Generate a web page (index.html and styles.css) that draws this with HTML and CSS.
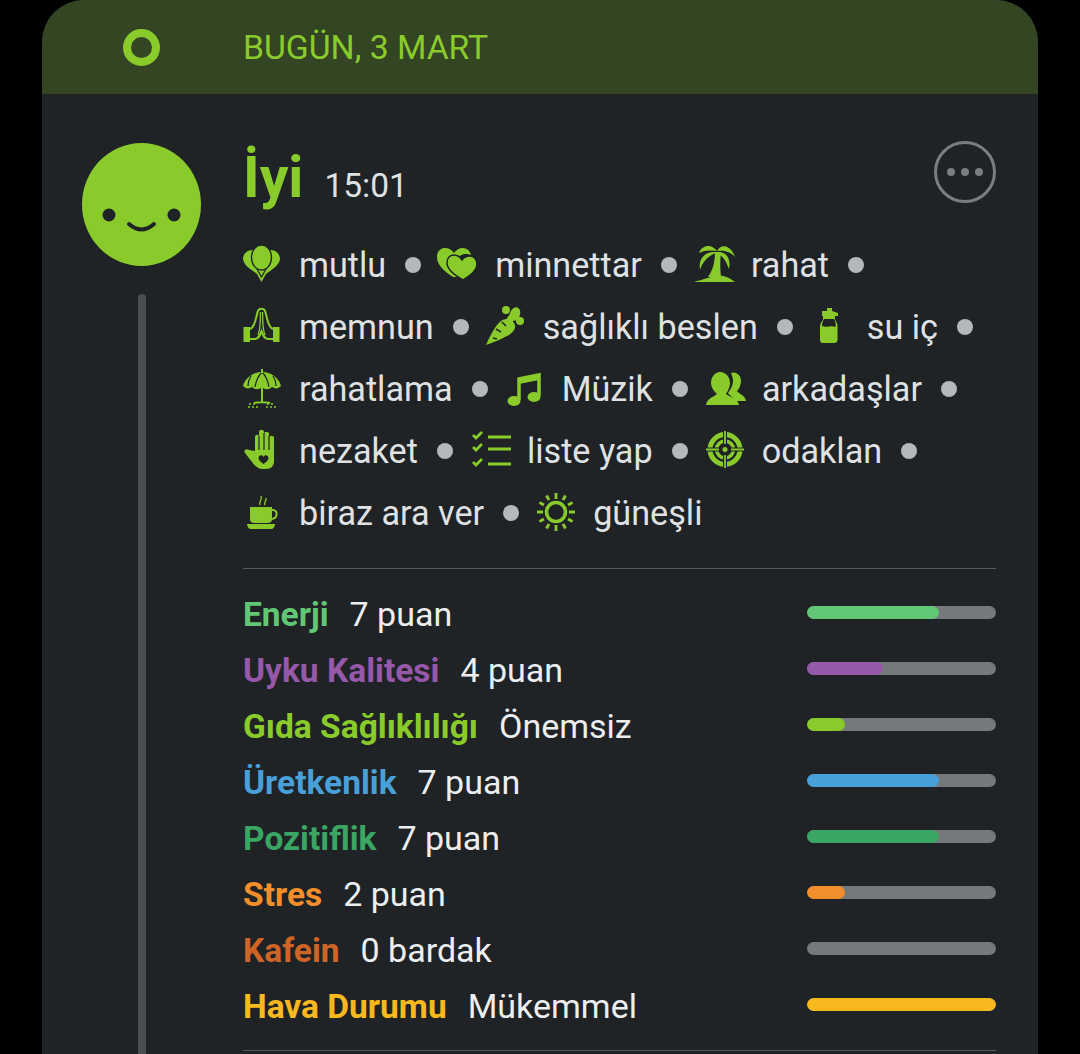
FILE: index.html
```html
<!DOCTYPE html>
<html lang="en">
<head>
    <meta charset="UTF-8">
    <meta name="viewport" content="width=device-width, initial-scale=1.0">
    <title>Bugün, 3 Mart</title>
    <link rel="stylesheet" href="styles.css">
</head>
<body>
    <div class="card">
        <div class="day-header">
            <div class="day-marker"><span class="ring"></span></div>
            <div class="day-title">BUGÜN, 3 MART</div>
        </div>
        <div class="entry">
            <div class="mood-col">
                <svg class="face" viewBox="0 0 119 123">
                    <ellipse cx="59.5" cy="61.5" rx="59.5" ry="61.5" fill="#8acb2c"/>
                    <circle cx="27" cy="72" r="6.5" fill="#1f2326"/>
                    <circle cx="92" cy="72" r="6.5" fill="#1f2326"/>
                    <path d="M47 81q12.500 11 25 0" fill="none" stroke="#1f2326" stroke-width="4" stroke-linecap="round"/>
                </svg>
                <div class="timeline"></div>
            </div>
            <div class="details">
                <div class="entry-head">
                    <span class="mood-name">İyi</span>
                    <span class="mood-time">15:01</span>
                    <div class="more-btn"><i></i><i></i><i></i></div>
                </div>
                <div class="tags">
                    <div class="tag">
                        <svg class="tag-icon" viewBox="0 0 40 40">
                            <path d="M10 5C3 5 0 10 0 14c1 7 9 11 14 15l4.500 8L23 29c5-4 13-8 14-15 0-4-3-9-10-9z" fill="#8acb2c"/>
                            <ellipse cx="18.500" cy="12.500" rx="10" ry="12.500" fill="#8acb2c" stroke="#1f2326" stroke-width="1.300"/>
                            <path d="M14 24l4.500 8 4.500-8" fill="none" stroke="#1f2326" stroke-width="1.300"/>
                        </svg>
                        <span>mutlu</span>
                    </div>
                    <div class="tag">
                        <svg class="tag-icon" viewBox="3 0 40 40">
                            <path d="M17 32C8 26 1 20 1 12 1 6 5 3 9 3c4 0 7 2 9 5 2-3 5-5 9-5 4 0 7 3 8 7-8-3-16 2-15 10 0 4 2 9 5 12z" fill="#8acb2c"/>
                            <path d="M27 35C20 31 11 25 11 18c0-5 3-8 7-8 3 0 6 2 8 5 2-3 5-4 8-4 4 0 7 4 7 8 0 7-7 11-14 16z" fill="#8acb2c" stroke="#1f2326" stroke-width="1.500"/>
                        </svg>
                        <span>minnettar</span>
                    </div>
                    <div class="tag">
                        <svg class="tag-icon" viewBox="0 0 40 40">
                            <path d="M22 6C18 0 8-2 4 8c5-3 12-3 18-2zM22 6c4-8 14-6 18 6-5-6-12-7-18-6zM21 7C10 6 3 14 5 25c3-9 8-14 16-17zM23 7c9 0 13 7 11 17-3-8-6-13-11-15z" fill="#8acb2c"/>
                            <path d="M20 7h6c-1 9-1 17 0 25H13c5-7 7-15 7-25z" fill="#8acb2c"/>
                            <path d="M-1 37C8 35 18 30 28 31c5 1 8 3 12 6z" fill="#8acb2c"/>
                        </svg>
                        <span>rahat</span>
                    </div>
                    <div class="tag">
                        <svg class="tag-icon" viewBox="0 0 40 40">
                            <path d="M7 22c6-2 6-14 8-18 1-3 6-3 7 0 2 4 2 16 8 18" fill="none" stroke="#8acb2c" stroke-width="2"/>
                            <path d="M7 32h5c4 0 5-4 6.500-8 1.500 4 2.500 8 6.500 8h5" fill="none" stroke="#8acb2c" stroke-width="2"/>
                            <path d="M17.500 5c-.5 9 .5 15-2.500 23M19.500 5c.5 9-.5 15 2.500 23" fill="none" stroke="#8acb2c" stroke-width="1.300"/>
                            <path d="M.5 20H7v15H.5zM30 20h6.500v15H30z" fill="#8acb2c"/>
                        </svg>
                        <span>memnun</span>
                    </div>
                    <div class="tag">
                        <svg class="tag-icon" viewBox="0 0 40 40">
                            <path d="M-1 38C4 27 8 19 14 14c5-4 12-2 14 4 1 4-2 7-6 10-7 4-15 7-23 10z" fill="#8acb2c"/>
                            <path d="M9 22l5 3M15 15l4 4M6 31l4 1" stroke="#1f2326" stroke-width="1.500"/>
                            <circle cx="19" cy="3" r="4" fill="#8acb2c"/>
                            <ellipse cx="28" cy="7" rx="5" ry="7" transform="rotate(20 28 7)" fill="#8acb2c"/>
                            <circle cx="33" cy="14" r="4" fill="#8acb2c"/>
                            <path d="M18 14l5-7 4 5-2 4z" fill="#8acb2c"/>
                        </svg>
                        <span>sağlıklı beslen</span>
                    </div>
                    <div class="tag">
                        <svg class="tag-icon" viewBox="0 0 40 40">
                            <path d="M11 4h5V1h5v3l6 2v3H11z" fill="#8acb2c"/>
                            <path d="M12 9h12v4c2 2 2.500 4 2.500 7v13c0 2-1.500 3-3.500 3H12c-2 0-3-1-3-3V20c0-3 1-5 3-7z" fill="#8acb2c"/>
                            <path d="M13 12h10c1.500 2 2 5 1.500 8-4.500-2-8.500 1-13.500-1 0-3 1-5 2-7z" fill="#1f2326"/>
                        </svg>
                        <span>su iç</span>
                    </div>
                    <div class="tag">
                        <svg class="tag-icon" viewBox="0 0 40 40">
                            <path d="M19 3c9 0 17 6 19 14-3 3-6 3-9 1-3 3-7 3-10 0-3 3-7 3-10 0-3 2-6 2-9-1C2 9 10 3 19 3z" fill="#8acb2c"/>
                            <path d="M19 3c-4 4-6 9-7 15M19 3c4 4 6 9 7 15M8 7c-2 3-3 6-3 10M30 7c2 3 3 6 3 10" stroke="#1f2326" stroke-width="1.200" fill="none"/>
                            <path d="M19 0v4M19 18v15M11 34c3-1 13-1 16 0" stroke="#8acb2c" stroke-width="2" fill="none"/>
                            <path d="M6 35h8M24 35h8M5 38h10M23 38h10" stroke="#8acb2c" stroke-width="1.500" stroke-dasharray="2 2"/>
                        </svg>
                        <span>rahatlama</span>
                    </div>
                    <div class="tag">
                        <svg class="tag-icon" viewBox="0 0 40 40">
                            <path d="M13 31V10l20-4v21" fill="none" stroke="#8acb2c" stroke-width="3.500"/>
                            <ellipse cx="8" cy="32" rx="6.500" ry="5" fill="#8acb2c"/>
                            <ellipse cx="28" cy="28" rx="6.500" ry="5" fill="#8acb2c"/>
                            <path d="M13 10l20-4v5l-20 4z" fill="#8acb2c"/>
                        </svg>
                        <span>Müzik</span>
                    </div>
                    <div class="tag">
                        <svg class="tag-icon" viewBox="0 -1 40 40">
                            <path d="M25 3c5-2 10 2 10 8 0 4-2 8-4 10 2 3 8 4 9 10H29c-2-4-6-6-7-8 2-3 5-7 5-12 0-3-1-6-2-8z" fill="#8acb2c"/>
                            <path d="M14 2c6 0 10 5 10 11 0 5-3 9-4 11 3 3 12 4 13 11H0c1-7 8-8 11-11-2-2-6-6-6-11C5 7 9 2 14 2z" fill="#8acb2c"/>
                        </svg>
                        <span>arkadaşlar</span>
                    </div>
                    <div class="tag">
                        <svg class="tag-icon" viewBox="0 0 40 40">
                            <path d="M12 20V6c0-3 4-3 4 0V1c0-3 5-3 5 0v2c0-3 5-3 5 0v4c0-3 5-3 5 0v23c0 5-3 8-8 8h-3c-5 0-8-3-11-7l-7-9c-2-3 2-5 4-3z" fill="#8acb2c"/>
                            <path d="M16 5v14M21 2v17M26 5v14" stroke="#1f2326" stroke-width="1.200"/>
                            <path d="M20.500 33c-3-2-5-4-5-6 0-3 4-4 5-1 1-3 5-2 5 1 0 2-2 4-5 6z" fill="#1f2326"/>
                        </svg>
                        <span>nezaket</span>
                    </div>
                    <div class="tag">
                        <svg class="tag-icon" viewBox="0 0 40 40">
                            <path d="M2 4l3 3 6-6M2 16l3 3 6-6M2 31l3 3 6-6" fill="none" stroke="#8acb2c" stroke-width="2.800"/>
                            <path d="M17 6h23M17 18h23M17 33h23" stroke="#8acb2c" stroke-width="3"/>
                        </svg>
                        <span>liste yap</span>
                    </div>
                    <div class="tag">
                        <svg class="tag-icon" viewBox="0 0 40 40">
                            <circle cx="19" cy="18.500" r="15" fill="none" stroke="#8acb2c" stroke-width="5"/>
                            <circle cx="19" cy="18.500" r="8.500" fill="none" stroke="#8acb2c" stroke-width="3.500"/>
                            <circle cx="19" cy="18.500" r="2.500" fill="#8acb2c"/>
                            <path d="M19 0v13M19 24v13M0 18.500h13M25 18.500h13" stroke="#1f2326" stroke-width="4"/>
                            <path d="M19 0v13M19 24v13M0 18.500h13M25 18.500h13" stroke="#8acb2c" stroke-width="1.800"/>
                        </svg>
                        <span>odaklan</span>
                    </div>
                    <div class="tag">
                        <svg class="tag-icon" viewBox="0 0 40 40">
                            <path d="M17 12c-2-3 3-5 1-9M22 12c-2-2 2-4 1-7" fill="none" stroke="#8acb2c" stroke-width="1.400"/>
                            <path d="M7 14h22v12c0 3-2 4-5 4H12c-3 0-5-1-5-4z" fill="#8acb2c"/>
                            <path d="M29 17h1c5 0 5 8-1 9" fill="none" stroke="#8acb2c" stroke-width="2"/>
                            <path d="M4 31h28c0 3-2 5-4 5H8c-2 0-4-2-4-5z" fill="#8acb2c"/>
                        </svg>
                        <span>biraz ara ver</span>
                    </div>
                    <div class="tag">
                        <svg class="tag-icon" viewBox="0 0 40 40">
                            <circle cx="19" cy="19" r="9.500" fill="none" stroke="#8acb2c" stroke-width="3.500"/>
                            <path d="M19 0v6M19 32v6M0 19h6M32 19h6M9.500 2.500l2.500 4.500M26 31l2.500 4.500M2.500 9.500l4.500 2.500M31 26l4.500 2.500M28.500 2.500L26 7M12 31l-2.500 4.500M35.500 9.500L31 12M7 26l-4.500 2.500" stroke="#8acb2c" stroke-width="2.800"/>
                        </svg>
                        <span>güneşli</span>
                    </div>
                </div>
                <div class="scales">
                    <div class="scale-row">
                        <span class="scale-name green">Enerji</span><span class="scale-value">7 puan</span>
                        <div class="bar"><div class="bar-fill green-bg" style="width: 70%"></div></div>
                    </div>
                    <div class="scale-row">
                        <span class="scale-name purple">Uyku Kalitesi</span><span class="scale-value">4 puan</span>
                        <div class="bar"><div class="bar-fill purple-bg" style="width: 40%"></div></div>
                    </div>
                    <div class="scale-row">
                        <span class="scale-name lime">Gıda Sağlıklılığı</span><span class="scale-value">Önemsiz</span>
                        <div class="bar"><div class="bar-fill lime-bg" style="width: 20%"></div></div>
                    </div>
                    <div class="scale-row">
                        <span class="scale-name blue">Üretkenlik</span><span class="scale-value">7 puan</span>
                        <div class="bar"><div class="bar-fill blue-bg" style="width: 70%"></div></div>
                    </div>
                    <div class="scale-row">
                        <span class="scale-name teal">Pozitiflik</span><span class="scale-value">7 puan</span>
                        <div class="bar"><div class="bar-fill teal-bg" style="width: 70%"></div></div>
                    </div>
                    <div class="scale-row">
                        <span class="scale-name orange">Stres</span><span class="scale-value">2 puan</span>
                        <div class="bar"><div class="bar-fill orange-bg" style="width: 20%"></div></div>
                    </div>
                    <div class="scale-row">
                        <span class="scale-name brown">Kafein</span><span class="scale-value">0 bardak</span>
                        <div class="bar"></div>
                    </div>
                    <div class="scale-row">
                        <span class="scale-name yellow">Hava Durumu</span><span class="scale-value">Mükemmel</span>
                        <div class="bar"><div class="bar-fill yellow-bg" style="width: 100%"></div></div>
                    </div>
                </div>
            </div>
        </div>
    </div>
</body>
</html>
```
FILE: styles.css
```css
html, body {
    height: 100%;
}
body {
    margin: 0;
    height: 1054px;
    overflow: hidden;
    background-color: #000;
    font-family: Roboto, "Liberation Sans", sans-serif;
}
.card {
    margin: 0 42px;
    height: 1054px;
    background: #1f2326;
    border-radius: 42px 42px 0 0;
    overflow: hidden;
}
.day-header {
    display: flex;
    align-items: center;
    height: 94px;
    background: #344524;
}
.day-marker {
    width: 201px;
    padding-left: 40px;
    box-sizing: border-box;
}
.ring {
    display: block;
    width: 37px;
    height: 37px;
    margin-left: 41px;
    box-sizing: border-box;
    border: 8px solid #8acb2c;
    border-radius: 50%;
}
.day-title {
    font-size: 33.7px;
    color: #8acb2c;
}
.entry {
    display: flex;
    height: 960px;
}
.mood-col {
    display: flex;
    flex-direction: column;
    align-items: center;
    width: 119px;
    margin: 0 42px 0 40px;
    padding-top: 49px;
    flex-shrink: 0;
}
.face {
    display: block;
    width: 119px;
    height: 123px;
}
.timeline {
    flex: 1;
    width: 8px;
    margin-top: 28px;
    background: #4a4f53;
    border-radius: 4px 4px 0 0;
}
.details {
    flex: 1;
    margin-right: 42px;
    min-width: 0;
}
.entry-head {
    position: relative;
    display: flex;
    align-items: baseline;
    height: 140px;
    padding-top: 50px;
    box-sizing: border-box;
}
.mood-name {
    font-size: 57px;
    font-weight: 700;
    color: #8acb2c;
    margin-right: 21px;
}
.mood-time {
    font-size: 33.5px;
    color: #dfe1e3;
}
.more-btn {
    position: absolute;
    top: 47px;
    right: 0;
    display: flex;
    align-items: center;
    justify-content: center;
    gap: 6px;
    width: 62px;
    height: 62px;
    box-sizing: border-box;
    border: 3px solid #7b7e80;
    border-radius: 50%;
}
.more-btn i {
    width: 8px;
    height: 8px;
    border-radius: 50%;
    background: #7b7e80;
}
.tags {
    display: flex;
    flex-wrap: wrap;
    padding-bottom: 24px;
    border-bottom: 1px solid #55595c;
}
.tag {
    display: flex;
    align-items: center;
    height: 62px;
    font-size: 34.2px;
    color: #dfe1e3;
}
.tag::after {
    content: "";
    width: 16px;
    height: 16px;
    margin: 0 18px 0 19px;
    border-radius: 50%;
    background: #b4b8ba;
}
.tag:last-child::after {
    display: none;
}
.tag-icon {
    width: 40px;
    height: 40px;
    margin-right: 16px;
    flex-shrink: 0;
    overflow: visible;
}
.scales {
    padding: 17px 0 16px;
    border-bottom: 1px solid #55595c;
}
.scale-row {
    display: flex;
    align-items: center;
    height: 56px;
    font-size: 34px;
}
.scale-name {
    font-size: 33.5px;
    font-weight: 700;
    margin-right: 21px;
}
.scale-value {
    color: #eceeef;
}
.bar {
    width: 189px;
    height: 13px;
    margin-left: auto;
    margin-bottom: 4px;
    border-radius: 7px;
    background: #75797b;
    overflow: hidden;
}
.bar-fill {
    height: 100%;
    border-radius: 7px;
}
.green { color: #62c774; }
.purple { color: #9658a8; }
.lime { color: #8acb2c; }
.blue { color: #49a0d8; }
.teal { color: #3ba563; }
.orange { color: #f28f2c; }
.brown { color: #cf6427; }
.yellow { color: #f8b91e; }
.green-bg { background: #62c774; }
.purple-bg { background: #9658a8; }
.lime-bg { background: #8acb2c; }
.blue-bg { background: #49a0d8; }
.teal-bg { background: #3ba563; }
.orange-bg { background: #f28f2c; }
.yellow-bg { background: #f8b91e; }
```
